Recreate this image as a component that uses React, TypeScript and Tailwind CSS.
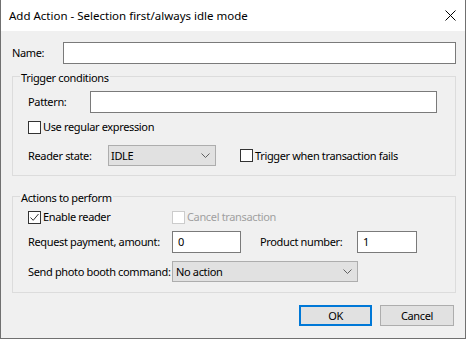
import React from "react";

const Check = ({ checked = false, disabled = false }: { checked?: boolean; disabled?: boolean }) => (
  <div
    className={`w-[13px] h-[13px] border flex items-center justify-center shrink-0 ${
      disabled ? "border-[#cccccc] bg-white" : "border-[#333333] bg-white"
    }`}
  >
    {checked && (
      <svg width="11" height="11" viewBox="0 0 11 11">
        <path d="M1.5 5.5 L4.2 8.3 L9.5 2" fill="none" stroke="#333333" strokeWidth="1" />
      </svg>
    )}
  </div>
);

const Chevron = () => (
  <svg width="9" height="5" viewBox="0 0 9 5" className="shrink-0">
    <path d="M0.5 0.5 L4.5 4.5 L8.5 0.5" fill="none" stroke="#606060" strokeWidth="1" />
  </svg>
);

export default function App() {
  return (
    <div className="w-[466px] h-[339px] border-x border-b border-[#707070] bg-[#f0f0f0] flex flex-col font-['Segoe_UI','Noto_Sans',sans-serif] text-[11px] tracking-[-0.35px] leading-[16px] text-black whitespace-nowrap">
      <div className="h-[31px] bg-white flex items-center justify-between pl-[8px] pr-[9px] shrink-0">
        <span className="text-[11.5px] tracking-normal">Add Action - Selection first/always idle mode</span>
        <svg width="11" height="11" viewBox="0 0 11 11">
          <path d="M0.5 0.5 L10.5 10.5 M10.5 0.5 L0.5 10.5" stroke="#000" strokeWidth="1" />
        </svg>
      </div>
      <div className="flex-1 flex flex-col pl-[11px] pr-[9px]">
        <div className="mt-[11px] h-[22px] flex items-center">
          <span className="w-[51px]">Name:</span>
          <div className="flex-1 h-[22px] border border-[#7a7a7a] bg-white" />
        </div>

        <div className="mt-[12px] h-[100px] border border-[#dcdcdc] relative pl-[15px] pt-[14px] flex flex-col">
          <span className="absolute left-[7px] top-[-7px] px-[1px] bg-[#f0f0f0]">Trigger conditions</span>
          <div className="h-[22px] flex items-center">
            <span className="w-[62px]">Pattern:</span>
            <div className="w-[347px] h-[22px] border border-[#7a7a7a] bg-white" />
          </div>
          <div className="mt-[6px] flex items-center gap-[2px]">
            <Check />
            <span>Use regular expression</span>
          </div>
          <div className="mt-[10px] h-[21px] flex items-center">
            <span className="w-[80px]">Reader state:</span>
            <div className="w-[108px] h-[21px] border border-[#adadad] bg-[#e1e1e1] flex items-center justify-between pl-[2px] pr-[5px]">
              <span>IDLE</span>
              <Chevron />
            </div>
            <div className="ml-[24px] flex items-center gap-[2px]">
              <Check />
              <span>Trigger when transaction fails</span>
            </div>
          </div>
        </div>

        <div className="mt-[20px] h-[97px] border border-[#dcdcdc] relative pl-[15px] pt-[12px] flex flex-col">
          <span className="absolute left-[7px] top-[-7px] px-[1px] bg-[#f0f0f0]">Actions to perform</span>
          <div className="flex items-center">
            <div className="w-[144px] flex items-center gap-[2px]">
              <Check checked />
              <span>Enable reader</span>
            </div>
            <div className="flex items-center gap-[2px]">
              <Check disabled />
              <span className="text-[#a0a0a0]">Cancel transaction</span>
            </div>
          </div>
          <div className="mt-[6px] h-[22px] flex items-center">
            <span className="w-[144px]">Request payment, amount:</span>
            <div className="w-[69px] h-[22px] border border-[#7a7a7a] bg-white px-[5px] flex items-center">0</div>
            <span className="ml-[19px] w-[97px]">Product number:</span>
            <div className="w-[60px] h-[22px] border border-[#7a7a7a] bg-white px-[5px] flex items-center">1</div>
          </div>
          <div className="mt-[8px] h-[21px] flex items-center">
            <span className="w-[144px]">Send photo booth command:</span>
            <div className="w-[186px] h-[21px] border border-[#adadad] bg-[#e1e1e1] flex items-center justify-between pl-[3px] pr-[5px]">
              <span>No action</span>
              <Chevron />
            </div>
          </div>
        </div>

        <div className="mt-[12px] flex justify-end gap-[8px] pr-[2px]">
          <button className="w-[73px] h-[21px] border-2 border-[#0078d7] bg-[#e1e1e1] flex items-center justify-center">OK</button>
          <button className="w-[74px] h-[21px] border border-[#adadad] bg-[#e1e1e1] flex items-center justify-center">Cancel</button>
        </div>
      </div>
    </div>
  );
}
